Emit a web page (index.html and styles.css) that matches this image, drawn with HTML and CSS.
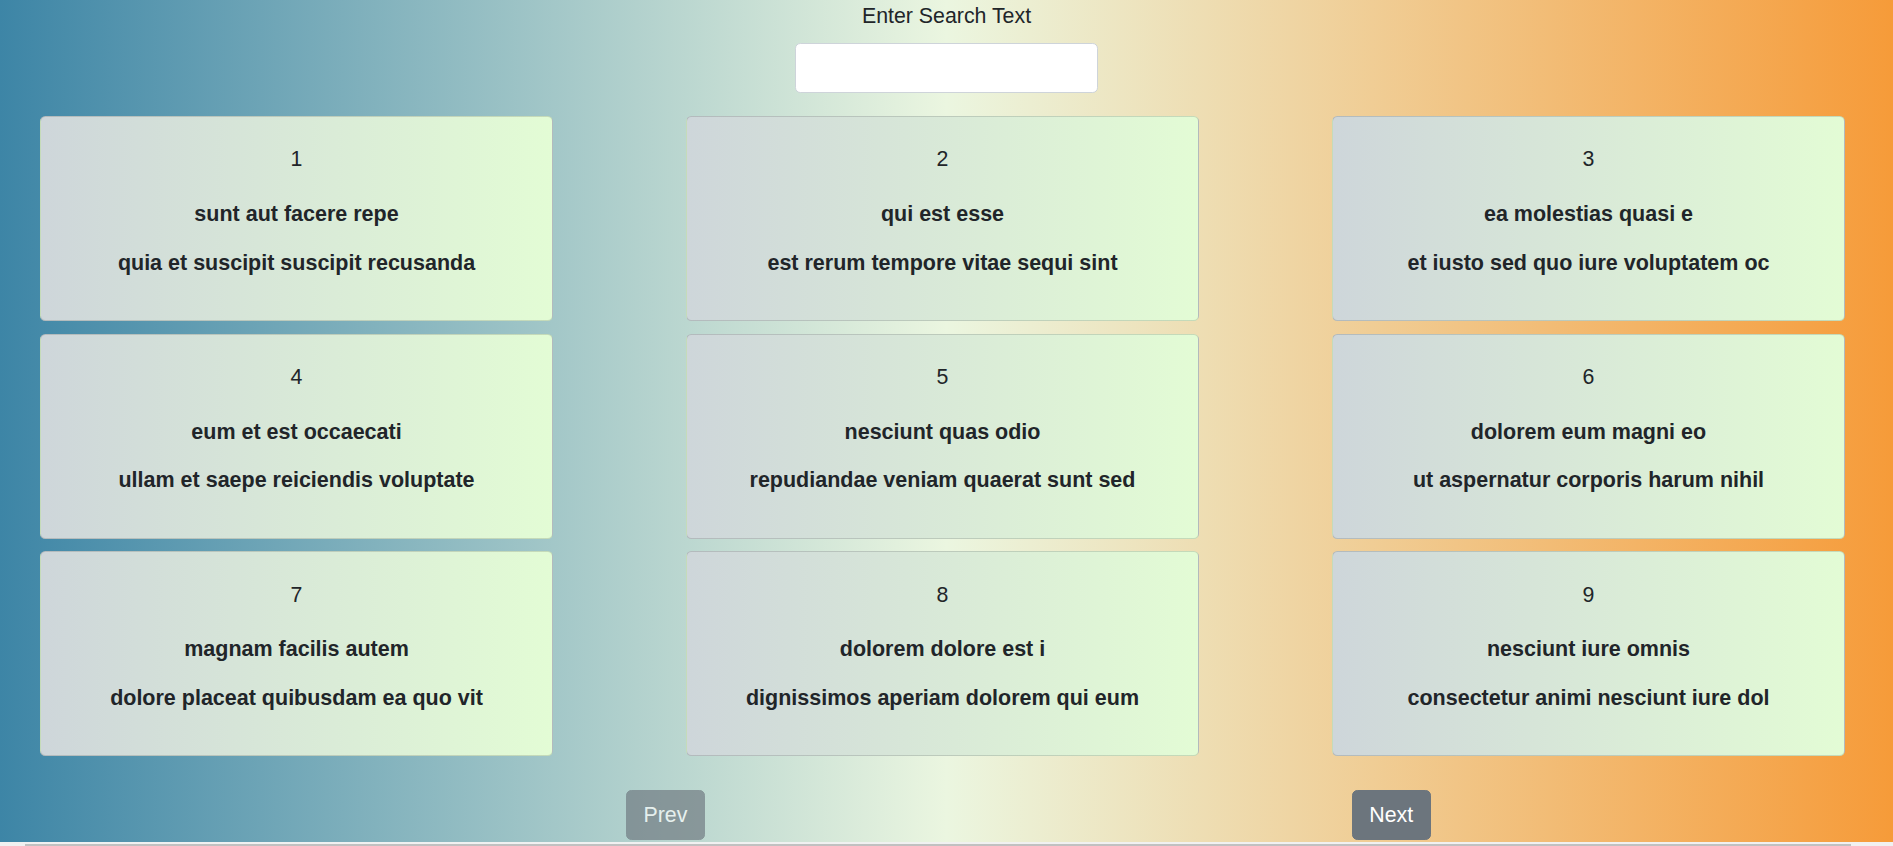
FILE: index.html
```html
<!DOCTYPE html>
<html lang="en">
<head>
<meta charset="utf-8">
<title>Posts</title>
<link rel="stylesheet" href="styles.css">
</head>
<body>
<div class="page">
  <header class="search">
    <label class="search-label" for="q">Enter Search Text</label>
    <input class="search-input" id="q" type="text">
  </header>

  <main class="grid">
    <div class="card"><p class="num">1</p><p class="title">sunt aut facere repe</p><p class="body">quia et suscipit suscipit recusanda</p></div>
    <div class="card"><p class="num">2</p><p class="title">qui est esse</p><p class="body">est rerum tempore vitae sequi sint</p></div>
    <div class="card"><p class="num">3</p><p class="title">ea molestias quasi e</p><p class="body">et iusto sed quo iure voluptatem oc</p></div>
    <div class="card"><p class="num">4</p><p class="title">eum et est occaecati</p><p class="body">ullam et saepe reiciendis voluptate</p></div>
    <div class="card"><p class="num">5</p><p class="title">nesciunt quas odio</p><p class="body">repudiandae veniam quaerat sunt sed</p></div>
    <div class="card"><p class="num">6</p><p class="title">dolorem eum magni eo</p><p class="body">ut aspernatur corporis harum nihil</p></div>
    <div class="card"><p class="num">7</p><p class="title">magnam facilis autem</p><p class="body">dolore placeat quibusdam ea quo vit</p></div>
    <div class="card"><p class="num">8</p><p class="title">dolorem dolore est i</p><p class="body">dignissimos aperiam dolorem qui eum</p></div>
    <div class="card"><p class="num">9</p><p class="title">nesciunt iure omnis</p><p class="body">consectetur animi nesciunt iure dol</p></div>
  </main>

  <nav class="pager">
    <button class="btn btn-prev" disabled>Prev</button>
    <button class="btn btn-next">Next</button>
  </nav>

  <div class="hscroll"><div class="hscroll-thumb"></div></div>
</div>
</body>
</html>
```

FILE: styles.css
```css
html, body {
  margin: 0;
  padding: 0;
}

body {
  width: 1893px;
  height: 846px;
  overflow: hidden;
  font-family: "Liberation Sans", Arial, sans-serif;
  font-size: 21.33px;
  line-height: 32px;
  color: #212529;
  background: linear-gradient(to right, #3d85a6 0%, #ebf6e0 50%, #f69b39 100%);
}

.page {
  position: relative;
  height: 846px;
}

.search {
  display: flex;
  flex-direction: column;
  align-items: center;
}

.search-label {
  display: block;
  height: 32px;
  line-height: 32px;
}

.search-input {
  display: block;
  box-sizing: border-box;
  margin-top: 11px;
  width: 303px;
  height: 50px;
  border: 1px solid #ced4da;
  border-radius: 5.33px;
  background: #fff;
  font: inherit;
  padding: 0 16px;
}

.grid {
  display: grid;
  grid-template-columns: repeat(3, 513px);
  column-gap: 133px;
  row-gap: 12.67px;
  margin-top: 23px;
  padding-left: 40px;
}

.card {
  box-sizing: border-box;
  height: 205px;
  border: 1px solid rgba(0, 0, 0, 0.13);
  border-radius: 5.33px;
  background: linear-gradient(to right, #ced6da, #e3fcd5);
  padding: 26.4px 20px 0;
  text-align: center;
}

.card p {
  margin: 0;
  line-height: 32px;
}

.num {
  margin-bottom: 22.6px !important;
}

.title {
  font-weight: bold;
  font-size: 21.5px;
  margin-bottom: 16.8px !important;
}

.body {
  font-weight: bold;
  font-size: 21.5px;
}

.pager {
  display: flex;
  margin-top: 34px;
  padding-left: 626px;
  gap: 647px;
}

.btn {
  box-sizing: border-box;
  height: 50px;
  padding: 8px 16.5px;
  font: inherit;
  line-height: 32px;
  color: #fff;
  background: #6c757d;
  border: 1px solid #6c757d;
  border-radius: 5.33px;
}

.btn-prev {
  opacity: 0.65;
}

.hscroll {
  position: absolute;
  left: 0;
  right: 0;
  bottom: 0;
  height: 4px;
  background: #f1f1f1;
}

.hscroll-thumb {
  position: absolute;
  left: 25px;
  bottom: 0;
  width: 1826px;
  height: 2px;
  background: #c1c1c1;
}
```
